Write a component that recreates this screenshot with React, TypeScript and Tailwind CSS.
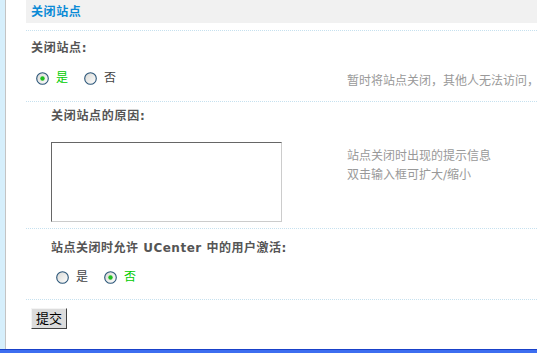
import React from "react";

function Radio({ checked }: { checked?: boolean }) {
  return (
    <svg width="13" height="13" viewBox="0 0 13 13" className="shrink-0">
      <defs>
        <linearGradient id={checked ? "rg1" : "rg0"} x1="0" y1="0" x2="1" y2="1">
          <stop offset="0" stopColor="#d8d8d4" />
          <stop offset="1" stopColor="#ffffff" />
        </linearGradient>
      </defs>
      <circle cx="6.5" cy="6.5" r="5.8" fill={`url(#${checked ? "rg1" : "rg0"})`} stroke="#2a5578" strokeWidth="1.1" />
      {checked && <circle cx="6.5" cy="6.5" r="2.2" fill="#1fbf1f" />}
    </svg>
  );
}

function Opt({ checked, label }: { checked?: boolean; label: string }) {
  return (
    <div className="flex items-center gap-[7px]">
      <Radio checked={checked} />
      <span className={checked ? "text-[#00cc00]" : "text-[#444]"}>{label}</span>
    </div>
  );
}

export default function App() {
  return (
    <div
      className="flex h-[353px] w-[537px] flex-col overflow-hidden bg-white text-[12px] leading-[14px]"
      style={{ fontFamily: '"DejaVu Sans", "Noto Sans CJK SC", sans-serif' }}
    >
      <div className="flex min-h-0 flex-1">
        <div className="w-[6px] shrink-0 border-r border-[#c4c4c4] bg-[#d6effc]" />
        <div className="w-[20px] shrink-0" />
        <div className="flex min-w-0 flex-1 flex-col">
          <div className="flex h-[23px] items-center bg-[#f1f1f1] pl-[5px] font-bold tracking-[0.6px] text-[#0a8ad6]">
            关闭站点
          </div>

          <div className="mt-[7px] h-[71px] border-t border-dotted border-[#c6e1ef] pl-[5px]">
            <div className="mt-[10px] font-bold tracking-[0.7px] text-[#555]">关闭站点:</div>
            <div className="mt-[13px] flex">
              <div className="flex w-[316px] shrink-0 items-center gap-[16px] pl-[5px]">
                <Opt checked label="是" />
                <Opt label="否" />
              </div>
              <div className="mt-[6px] whitespace-nowrap text-[#999]">暂时将站点关闭，其他人无法访问，</div>
            </div>
          </div>

          <div className="h-[127px] border-t border-dotted border-[#c6e1ef] pl-[25px]">
            <div className="mt-[7px] font-bold tracking-[0.7px] text-[#555]">关闭站点的原因:</div>
            <div className="mt-[19px] flex">
              <div className="w-[296px] shrink-0">
                <textarea className="block h-[80px] w-[231px] resize-none border border-t-[#666] border-l-[#666] border-b-[#ccc] border-r-[#ccc] bg-white outline-none" />
              </div>
              <div className="mt-[5px] leading-[19px] whitespace-nowrap text-[#999]">
                <div>站点关闭时出现的提示信息</div>
                <div>双击输入框可扩大/缩小</div>
              </div>
            </div>
          </div>

          <div className="h-[71px] border-t border-dotted border-[#c6e1ef] pl-[25px]">
            <div className="mt-[12px] font-bold tracking-[0.5px] whitespace-nowrap text-[#555]">站点关闭时允许 UCenter 中的用户激活:</div>
            <div className="mt-[15px] flex items-center gap-[16px] pl-[5px]">
              <Opt label="是" />
              <Opt checked label="否" />
            </div>
          </div>

          <div className="border-t border-dotted border-[#c6e1ef] pl-[5px] pt-[8px]">
            <button className="flex h-[21px] w-[36px] items-center justify-center border border-t-[#f4f4f4] border-l-[#f4f4f4] border-b-[#404040] border-r-[#404040] bg-[#dcdcdc] text-[13px] text-black">
              提交
            </button>
          </div>
        </div>
      </div>
      <div className="h-[4px] shrink-0 border-t border-[#1941c9] bg-[#3d6ef0]" />
    </div>
  );
}
